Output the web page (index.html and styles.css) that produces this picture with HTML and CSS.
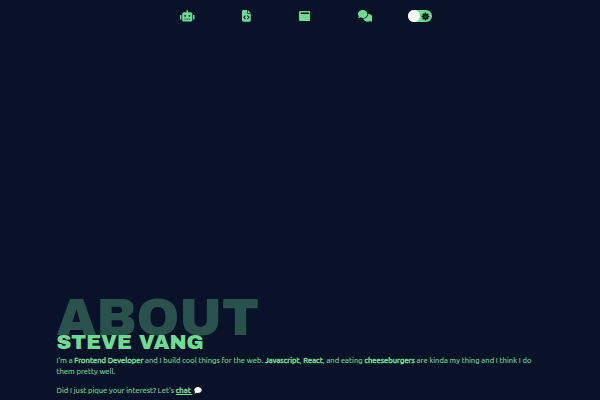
FILE: index.html
```html
<!DOCTYPE html>
<html lang="en">
<head>
<meta charset="utf-8">
<title>Steve Vang</title>
<link rel="stylesheet" href="styles.css">
</head>
<body>
<nav class="nav">
  <a class="icon robot"><svg viewBox="0 0 640 512"><path fill-rule="evenodd" d="M32 224h32v192H32a32 32 0 0 1-32-32V256a32 32 0 0 1 32-32zm512-48v272a64 64 0 0 1-64 64H160a64 64 0 0 1-64-64V176a80 80 0 0 1 80-80h112V32a32 32 0 0 1 64 0v64h112a80 80 0 0 1 80 80zM264 256a40 40 0 1 0-80 0 40 40 0 0 0 80 0zm-8 128h-64v32h64zm96 0h-64v32h64zm104-128a40 40 0 1 0-80 0 40 40 0 0 0 80 0zm-8 128h-64v32h64zm192-128v128a32 32 0 0 1-32 32h-32V224h32a32 32 0 0 1 32 32z"/></svg></a>
  <a class="icon file"><svg viewBox="0 0 384 512"><path d="M0 64a64 64 0 0 1 64-64h160v128a32 32 0 0 0 32 32h128v288a64 64 0 0 1-64 64H64a64 64 0 0 1-64-64zM384 128H256V0z"/><path class="mark" d="M153 240l-74 80 74 80M231 240l74 80-74 80"/></svg></a>
  <a class="icon window"><svg viewBox="0 0 512 448"><path fill-rule="evenodd" d="M64 0h384a64 64 0 0 1 64 64v320a64 64 0 0 1-64 64H64a64 64 0 0 1-64-64V64A64 64 0 0 1 64 0zm32 64a32 32 0 0 0 0 64h320a32 32 0 0 0 0-64z"/></svg></a>
  <a class="icon chat"><svg viewBox="0 0 640 512"><path d="M208 352c115 0 208-79 208-176S323 0 208 0 0 79 0 176c0 38 14 74 39 103-4 19-14 40-30 55-12 13-11 18 7 18 32 0 71-12 104-32 27 20 56 32 88 32z"/><path d="M448 176c0 112-99 199-221 208 25 74 106 128 205 128 31 0 61-6 88-17 33 15 71 17 104 17 19 0 21-8 7-19-15-14-25-34-30-53 25-29 39-65 39-104 0-93-85-168-192-176z"/></svg></a>
  <button class="toggle" aria-label="Theme"><span class="knob"></span><svg class="sun" viewBox="-8 -8 16 16"><circle r="4"/><path d="M0-7V7M-7 0H7M-5-5L5 5M-5 5L5-5"/><circle class="core" r="2.2"/></svg></button>
</nav>
<main class="about">
  <h1 class="title">ABOUT</h1>
  <h2 class="name">STEVE VANG</h2>
  <p class="copy">I'm a <b>Frontend Developer</b> and I build cool things for the web. <b>Javascript</b>, <b>React</b>, and eating <b>cheeseburgers</b> are kinda my thing and I think I do<br>them pretty well.</p>
  <p class="copy">Did I just pique your interest? Let's <a class="link">chat </a><svg class="bubble" viewBox="0 0 512 480"><path d="M256 0c141 0 256 93 256 208S397 416 256 416c-38 0-74-7-107-19C113 424 70 448 20 448c-16 0-18-12-9-22 18-19 35-49 43-80C20 309 0 260 0 208 0 93 115 0 256 0z"/></svg></p>
</main>
</body>
</html>
```
FILE: styles.css
```css
body {
  margin: 0;
  height: 400px;
  overflow: hidden;
  background: #0a1229;
  color: #6ddc90;
  font-family: Ubuntu, "Noto Sans", sans-serif;
  display: flex;
  flex-direction: column;
  justify-content: space-between;
}
.nav {
  height: 32.5px;
  display: flex;
  align-items: center;
  padding-left: 180px;
}
.icon { display: flex; fill: currentColor; }
.icon svg { width: 100%; display: block; }
.robot { width: 14.5px; margin-right: 47.5px; }
.file { width: 8.8px; margin-right: 47.9px; }
.window { width: 11.7px; margin-right: 47.5px; }
.chat { width: 14.6px; margin-right: 35.2px; }
.mark { fill: none; stroke: #0a1229; stroke-width: 44; }
.toggle {
  display: flex;
  align-items: center;
  justify-content: space-between;
  width: 24.5px;
  height: 12px;
  padding: 0 2px 0 0;
  border: 0;
  border-radius: 6px;
  background: #6ddc90;
}
.knob { width: 12px; height: 12px; border-radius: 50%; background: #fff; }
.sun { width: 9px; height: 9px; stroke: #0a1410; stroke-width: 2.5; }
.core { fill: #265438; stroke: none; }
.about { padding: 0 56.5px; height: 110px; }
.title, .name {
  margin: 0;
  font-family: "Archivo Black", Inter, sans-serif;
  font-weight: 400;
  white-space: nowrap;
}
.title { font-size: 51.4px; line-height: 57px; height: 42px; color: #2a524c; }
.name { position: relative; font-size: 20.56px; line-height: 20px; height: 23px; }
.copy { margin: 0 0 8px; font-size: 7.65px; line-height: 11px; white-space: nowrap; -webkit-text-stroke: 0.12px currentColor; }
.copy b, .link { font-weight: 400; -webkit-text-stroke: 0.45px currentColor; }
.link { text-decoration: underline; white-space: pre; }
.bubble { width: 8px; height: 7px; fill: #fff; margin-left: 1.5px; vertical-align: -1px; }
```
